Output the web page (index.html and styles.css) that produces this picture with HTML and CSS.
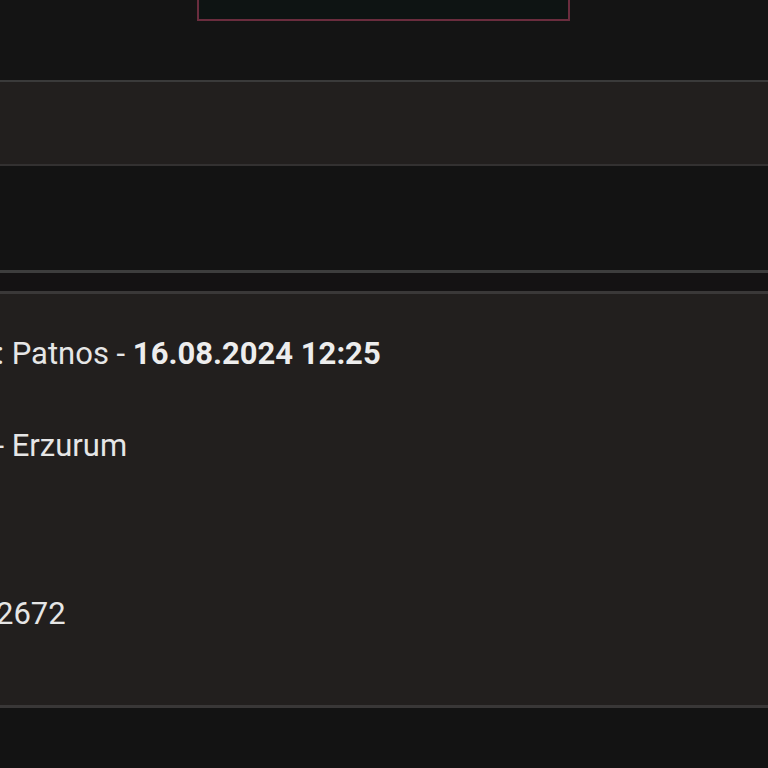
FILE: index.html
```html
<!DOCTYPE html>
<html lang="tr">
<head>
<meta charset="utf-8">
<title>Bilet Detayı</title>
<link rel="stylesheet" href="styles.css">
</head>
<body>
  <div class="top">
    <div class="btn">BİLETİ İPTAL ET</div>
  </div>
  <div class="bar"></div>
  <div class="gap"></div>
  <div class="thin"></div>
  <div class="details">
    <div class="row row-first"><span class="cut">Kalkış:</span> Patnos - <b>16.08.2024 12:25</b></div>
    <div class="row row-second"><span class="cut">Patnos -</span> Erzurum</div>
    <div class="row row-third"><span class="cut cut-tight">Bilet No: 1</span>2672</div>
  </div>
  <div class="bottom"></div>
</body>
</html>
```
FILE: styles.css
```css
html, body {
  margin: 0;
  padding: 0;
  background: #131313;
  font-family: Roboto, "Noto Sans", sans-serif;
  color: #e6e6e6;
  overflow: hidden;
}
.top {
  height: 80px;
  background: #141414;
  display: flex;
  justify-content: center;
  overflow: hidden;
}
.btn {
  box-sizing: border-box;
  width: 373px;
  height: 52px;
  margin-top: -31px;
  margin-left: -1px;
  border: 2px solid #6a2d3e;
  background: #0e1413;
  color: #8a8a8a;
  font-size: 26px;
  line-height: 37px;
  text-align: center;
}
.bar {
  height: 82px;
  background: #221f1e;
  border-top: 2px solid #3a3a3a;
  border-bottom: 2px solid #333131;
}
.gap {
  height: 104px;
  background: #131313;
  border-bottom: 3px solid #3d3d3d;
}
.thin {
  height: 18px;
  background: #141213;
  border-bottom: 3px solid #3a3838;
}
.details {
  box-sizing: border-box;
  height: 414px;
  background: #221f1e;
  border-bottom: 3px solid #393737;
  padding-top: 40px;
  overflow: hidden;
}
.row {
  margin-left: -200px;
  font-size: 31px;
  line-height: 40px;
  white-space: nowrap;
}
.row b { font-weight: 700; color: #ededed; }
.row-second { margin-top: 52px; }
.row-third { margin-top: 128px; }
.cut {
  display: inline-block;
  width: 204px;
  text-align: right;
}
.cut-tight { width: 196px; }
.bottom {
  height: 60px;
  background: #131313;
}
```
